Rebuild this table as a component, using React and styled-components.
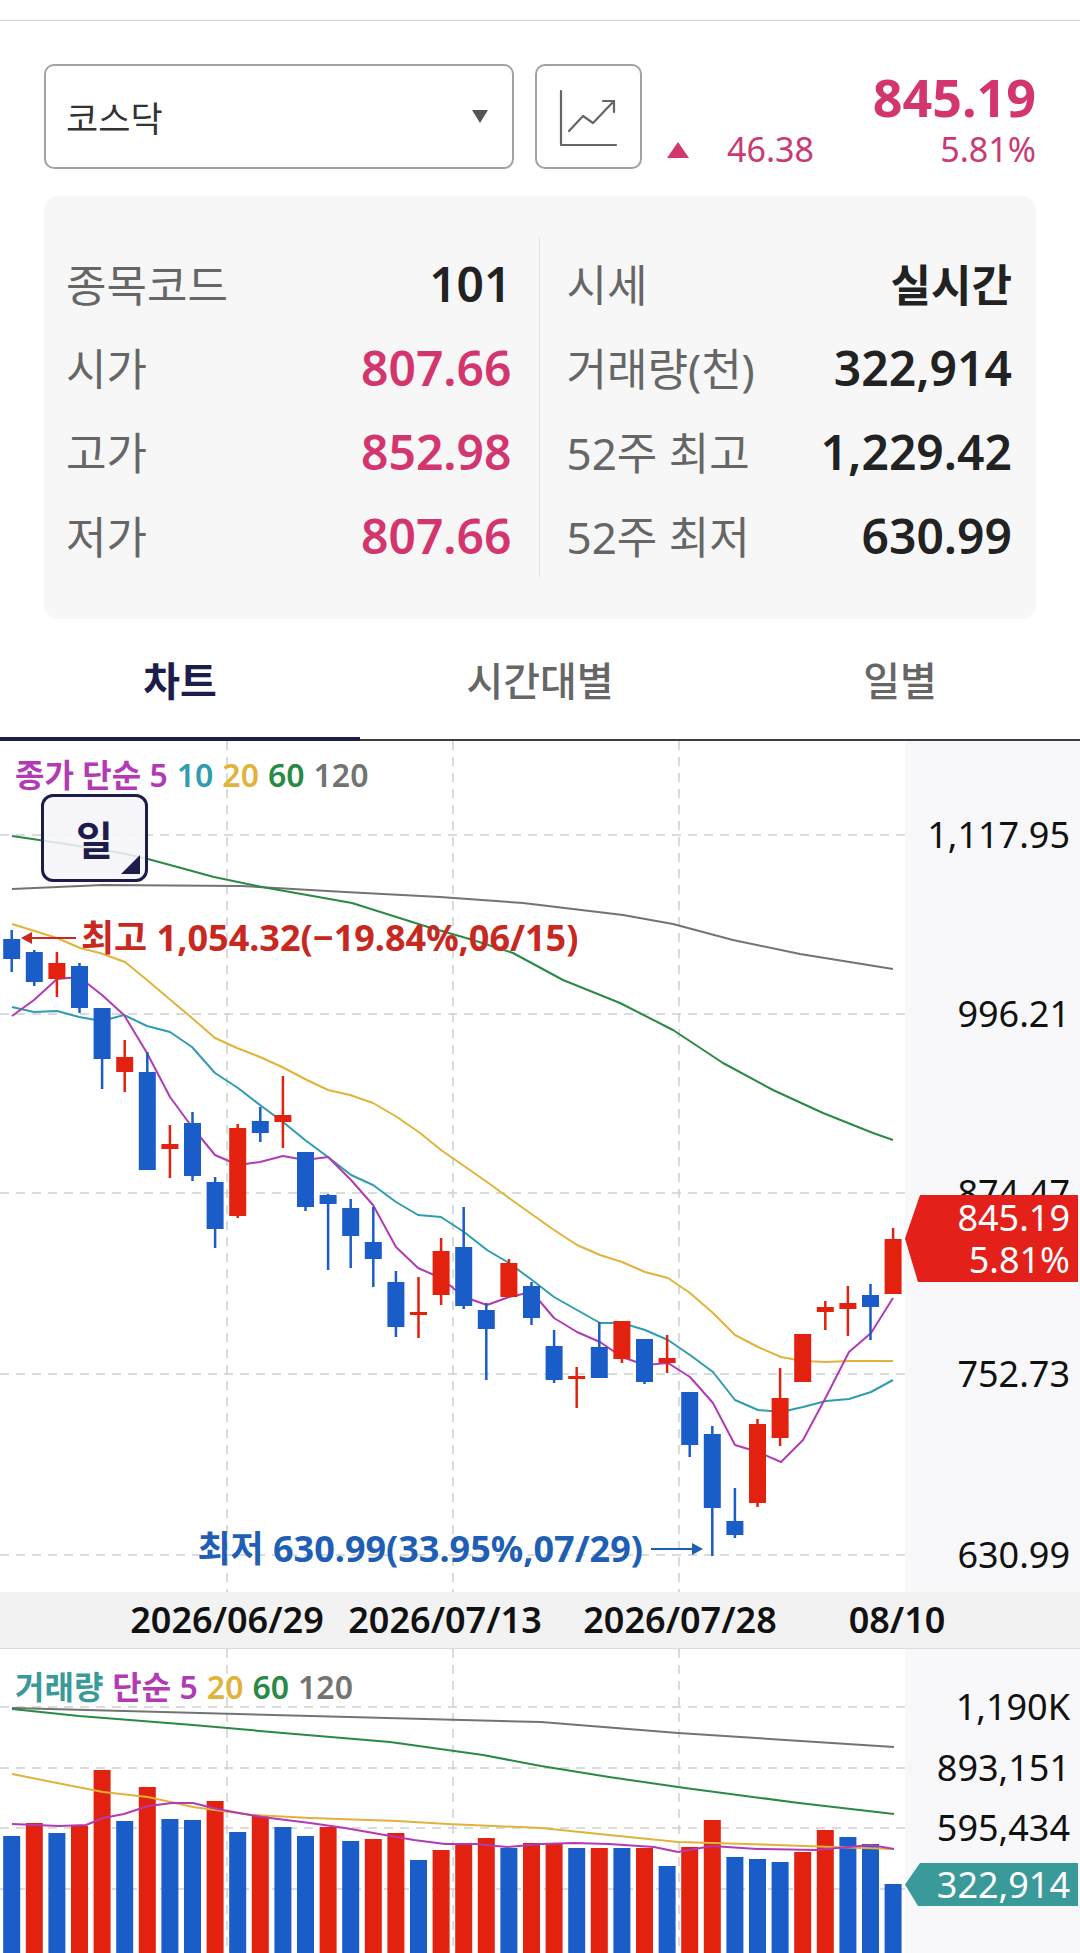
import React from "react";
import styled, { createGlobalStyle } from "styled-components";

const PINK = "#d3356f";
const RED = "#e3210f";
const BLUE = "#1a5cc8";
const NAVY = "#1d1d4b";
const MA = {
  m5: "#b23bb5",
  m10: "#2e9db0",
  m20: "#e2b33a",
  m60: "#2a8a45",
  m120: "#737373",
  vol: "#3a9a9a",
};

const GlobalStyle = createGlobalStyle`
  html, body {
    margin: 0;
    padding: 0;
    background: #fff;
  }
  body {
    font-family: "Noto Sans", "Noto Sans CJK KR", sans-serif;
    width: 1080px;
    overflow: hidden;
  }
  * {
    box-sizing: border-box;
  }
`;

// [bodyTop, bodyBottom, wickTop, wickBottom, color] in page pixels
const CANDLES = [
  [939, 959, 930, 972, "b"],
  [952, 982, 950, 986, "b"],
  [963, 979, 952, 997, "r"],
  [966, 1008, 963, 1013, "b"],
  [1008, 1059, 1008, 1089, "b"],
  [1057, 1072, 1040, 1092, "r"],
  [1072, 1170, 1052, 1170, "b"],
  [1144, 1149, 1125, 1178, "r"],
  [1123, 1176, 1112, 1181, "b"],
  [1182, 1229, 1177, 1248, "b"],
  [1128, 1216, 1124, 1218, "r"],
  [1121, 1133, 1107, 1142, "b"],
  [1115, 1122, 1076, 1148, "r"],
  [1152, 1207, 1152, 1211, "b"],
  [1195, 1204, 1194, 1270, "b"],
  [1208, 1236, 1199, 1268, "b"],
  [1242, 1259, 1207, 1287, "b"],
  [1282, 1327, 1271, 1337, "b"],
  [1312, 1315, 1277, 1338, "r"],
  [1251, 1295, 1238, 1305, "r"],
  [1247, 1306, 1207, 1309, "b"],
  [1310, 1329, 1303, 1380, "b"],
  [1263, 1297, 1259, 1297, "r"],
  [1286, 1318, 1282, 1325, "b"],
  [1346, 1380, 1330, 1383, "b"],
  [1376, 1379, 1367, 1408, "r"],
  [1347, 1378, 1322, 1378, "b"],
  [1321, 1359, 1321, 1363, "r"],
  [1339, 1382, 1339, 1384, "b"],
  [1358, 1363, 1335, 1373, "r"],
  [1392, 1445, 1392, 1457, "b"],
  [1434, 1508, 1426, 1556, "b"],
  [1521, 1535, 1488, 1538, "b"],
  [1424, 1503, 1419, 1507, "r"],
  [1398, 1438, 1368, 1446, "r"],
  [1334, 1382, 1334, 1382, "r"],
  [1307, 1312, 1301, 1330, "r"],
  [1303, 1309, 1286, 1336, "r"],
  [1295, 1307, 1284, 1340, "b"],
  [1239, 1294, 1228, 1294, "r"],
];

const PRICE_MA = [
  {
    color: MA.m120,
    pts: [[12, 889], [103, 885], [241, 886], [345, 892], [440, 897], [523, 903], [623, 915], [673, 924], [733, 940], [800, 954], [893, 969]],
  },
  {
    color: MA.m60,
    pts: [[12, 836], [66, 844], [121, 853], [148, 859], [214, 877], [262, 887], [352, 903], [428, 927], [473, 940], [513, 953], [563, 980], [620, 1003], [673, 1030], [723, 1063], [773, 1090], [823, 1113], [873, 1133], [893, 1140]],
  },
  {
    color: MA.m20,
    pts: [[12, 924], [57, 938], [80, 948], [100, 953], [125, 962], [147, 980], [167, 997], [192, 1018], [215, 1038], [237, 1048], [260, 1057], [282, 1067], [307, 1080], [328, 1090], [350, 1095], [373, 1103], [397, 1117], [420, 1133], [441, 1150], [464, 1166], [487, 1182], [509, 1198], [530, 1213], [554, 1230], [577, 1245], [600, 1255], [622, 1262], [645, 1272], [668, 1278], [690, 1293], [713, 1313], [735, 1335], [758, 1347], [781, 1357], [803, 1361], [826, 1362], [849, 1361], [893, 1361]],
  },
  {
    color: MA.m10,
    pts: [[12, 1007], [34, 1012], [57, 1011], [79, 1017], [102, 1021], [124, 1015], [147, 1026], [170, 1032], [192, 1047], [215, 1073], [238, 1088], [260, 1105], [283, 1122], [305, 1140], [328, 1157], [351, 1175], [373, 1185], [396, 1202], [418, 1215], [441, 1217], [464, 1232], [487, 1250], [509, 1263], [532, 1280], [554, 1297], [577, 1310], [600, 1323], [622, 1323], [645, 1330], [668, 1340], [690, 1355], [713, 1372], [735, 1400], [758, 1410], [781, 1412], [803, 1407], [826, 1401], [849, 1399], [871, 1392], [893, 1380]],
  },
  {
    color: MA.m5,
    pts: [[12, 1016], [34, 1000], [57, 979], [79, 977], [102, 995], [124, 1015], [147, 1053], [170, 1097], [192, 1127], [215, 1155], [238, 1165], [260, 1162], [283, 1156], [305, 1160], [328, 1157], [351, 1180], [373, 1205], [396, 1247], [418, 1268], [441, 1278], [464, 1297], [487, 1305], [509, 1297], [532, 1292], [554, 1318], [577, 1332], [600, 1342], [622, 1357], [645, 1365], [668, 1363], [690, 1377], [713, 1403], [735, 1445], [758, 1452], [781, 1462], [803, 1440], [826, 1397], [849, 1352], [871, 1333], [893, 1298]],
  },
];

// [top, color]
const VOLUME = [
  [1836, "b"], [1823, "r"], [1833, "b"], [1826, "r"], [1770, "r"], [1821, "b"], [1787, "r"], [1819, "b"],
  [1820, "b"], [1801, "r"], [1832, "b"], [1816, "r"], [1827, "b"], [1836, "b"], [1827, "r"], [1841, "b"],
  [1839, "r"], [1833, "r"], [1860, "b"], [1850, "r"], [1843, "r"], [1838, "r"], [1848, "b"], [1843, "r"],
  [1843, "r"], [1848, "b"], [1848, "r"], [1848, "b"], [1848, "r"], [1866, "b"], [1847, "r"], [1820, "r"],
  [1857, "b"], [1859, "b"], [1862, "b"], [1852, "r"], [1830, "r"], [1837, "b"], [1844, "b"], [1884, "b"],
];

const VOLUME_MA = [
  { color: MA.m120, pts: [[12, 1708], [541, 1722], [678, 1733], [894, 1747]] },
  { color: MA.m60, pts: [[12, 1709], [79, 1716], [193, 1725], [283, 1733], [390, 1742], [483, 1755], [541, 1766], [609, 1777], [685, 1788], [799, 1803], [894, 1814]] },
  { color: MA.m20, pts: [[12, 1774], [52, 1782], [103, 1792], [148, 1797], [193, 1807], [252, 1815], [310, 1818], [397, 1821], [448, 1824], [541, 1828], [609, 1835], [678, 1842], [747, 1844], [833, 1847], [894, 1849]] },
  { color: MA.m5, pts: [[12, 1824], [59, 1826], [86, 1825], [103, 1818], [124, 1814], [148, 1806], [172, 1803], [193, 1803], [217, 1809], [262, 1817], [310, 1823], [345, 1828], [379, 1834], [414, 1840], [445, 1844], [476, 1844], [507, 1847], [541, 1844], [574, 1843], [609, 1844], [654, 1847], [678, 1852], [712, 1846], [757, 1849], [816, 1850], [871, 1845], [894, 1849]] },
];

const candleX = (i) => 11.7 + 22.6 * i;
const toPoints = (pts) => pts.map((p) => p.join(",")).join(" ");
const tone = (c) => (c === "r" ? RED : BLUE);

const PRICE_GRID = [835, 1014, 1193, 1374, 1555];
const VOL_GRID = [1707, 1768, 1828, 1889];
const V_GRID = [227, 453, 679];

const CHART_TOP = 741;
const VOL_TOP = 1649;

const Page = styled.div`
  width: 1080px;
  background: #fff;
`;

const TopRule = styled.div`
  height: 21px;
  border-bottom: 1px solid #d2d2d2;
`;

const Header = styled.div`
  display: flex;
  gap: 21px;
  height: 105px;
  margin: 43px 44px 0;
`;

const Select = styled.div`
  width: 470px;
  display: flex;
  align-items: center;
  justify-content: space-between;
  padding: 0 24px 0 20px;
  border: 2px solid #a2a2a2;
  border-radius: 10px;
  font-family: "Noto Sans CJK KR", sans-serif;
  font-size: 35px;
  color: #333;
`;

const Caret = styled.span`
  width: 0;
  height: 0;
  border-left: 8px solid transparent;
  border-right: 8px solid transparent;
  border-top: 13px solid #555;
`;

const IconButton = styled.div`
  width: 107px;
  border: 2px solid #a2a2a2;
  border-radius: 10px;
  display: flex;
  & svg {
    width: 100%;
    height: 100%;
  }
`;

const PriceBlock = styled.div`
  flex: 1;
  display: flex;
  flex-direction: column;
`;

const PriceNow = styled.div`
  height: 66px;
  line-height: 66px;
  text-align: right;
  font-size: 52px;
  font-weight: 700;
  color: ${PINK};
`;

const PriceSub = styled.div`
  height: 39px;
  display: flex;
  align-items: center;
  font-size: 34px;
  line-height: 39px;
  color: #c93a74;
`;

const UpMark = styled.span`
  margin-left: 4px;
  width: 0;
  height: 0;
  border-left: 11px solid transparent;
  border-right: 11px solid transparent;
  border-bottom: 16px solid ${PINK};
`;

const Change = styled.span`
  margin-left: 38px;
`;

const Rate = styled.span`
  margin-left: auto;
`;

const InfoCard = styled.div`
  margin: 27px 44px 0;
  height: 423px;
  padding: 45px 24px 42px 22px;
  background: #f7f7f8;
  border-radius: 14px;
  display: grid;
  grid-template-columns: 1fr 1px 1fr;
  column-gap: 27px;
`;

const InfoColumn = styled.div`
  display: flex;
  flex-direction: column;
`;

const InfoDivider = styled.div`
  background: #e2e2e4;
  margin: -4px 0 0;
`;

const InfoRow = styled.div`
  height: 84px;
  display: flex;
  align-items: center;
  justify-content: space-between;
`;

const InfoLabel = styled.span`
  font-family: "Noto Sans", "Noto Sans CJK KR", sans-serif;
  font-size: 44px;
  color: #666;
`;

const InfoValue = styled.span`
  font-size: ${(p) => (p.$korean ? "44px" : "48px")};
  font-weight: ${(p) => (p.$korean ? 700 : 600)};
  color: ${(p) => (p.$pink ? PINK : "#222")};
`;

const Tabs = styled.div`
  display: grid;
  grid-template-columns: repeat(3, 1fr);
  height: 122px;
  border-bottom: 2px solid #3c3c44;
`;

const Tab = styled.div`
  position: relative;
  display: flex;
  align-items: center;
  justify-content: center;
  font-family: "Noto Sans CJK KR", sans-serif;
  font-size: 40px;
  font-weight: ${(p) => (p.$active ? 700 : 500)};
  color: ${(p) => (p.$active ? NAVY : "#666")};

  ${(p) =>
    p.$active &&
    `
    &::after {
      content: "";
      position: absolute;
      left: 0;
      right: 0;
      bottom: -3px;
      height: 5px;
      background: ${NAVY};
    }
  `}
`;

const ChartRow = styled.div`
  display: flex;
  height: ${(p) => p.$height}px;
`;

const Plot = styled.div`
  position: relative;
  width: 905px;
  background: #fff;
  & > svg {
    display: block;
  }
`;

const AxisColumn = styled.div`
  position: relative;
  flex: 1;
  background: #f8f8fa;
`;

const AxisLabel = styled.div`
  position: absolute;
  right: 10px;
  top: ${(p) => p.$y}px;
  transform: translateY(-50%);
  font-size: 36px;
  line-height: 1;
  color: #111;
  white-space: nowrap;
`;

const Legend = styled.div`
  position: absolute;
  left: 15px;
  top: ${(p) => p.$top}px;
  font-size: 32px;
  font-weight: 600;
  line-height: 36px;
  white-space: nowrap;
  display: flex;
  gap: 9px;
`;

const LegendItem = styled.span`
  color: ${(p) => p.$color};
`;

const DayButton = styled.div`
  position: absolute;
  left: 41px;
  top: 53px;
  width: 107px;
  height: 88px;
  border: 3px solid ${NAVY};
  border-radius: 12px;
  background: rgba(246, 246, 250, 0.85);
  display: flex;
  align-items: center;
  justify-content: center;
  font-family: "Noto Sans CJK KR", sans-serif;
  font-size: 40px;
  font-weight: 700;
  color: ${NAVY};

  &::after {
    content: "";
    position: absolute;
    right: 5px;
    bottom: 5px;
    width: 0;
    height: 0;
    border-left: 19px solid transparent;
    border-bottom: 19px solid ${NAVY};
  }
`;

const Marker = styled.div`
  position: absolute;
  left: 0;
  right: 2px;
  top: ${(p) => p.$top}px;
  height: ${(p) => p.$height}px;
  background: ${(p) => p.$bg};
  clip-path: polygon(15px 0, 100% 0, 100% 100%, 13px 100%, 0 50%);
  display: flex;
  flex-direction: column;
  justify-content: center;
  align-items: flex-end;
  padding-right: 8px;
  font-size: 36px;
  line-height: 42px;
  color: #fff;
`;

const DateBar = styled.div`
  position: relative;
  height: 57px;
  background: #f2f2f3;
  border-bottom: 1px solid #dcdcdc;
`;

const DateLabel = styled.div`
  position: absolute;
  left: ${(p) => p.$x}px;
  top: 50%;
  transform: translate(-50%, -50%);
  font-size: 36px;
  font-weight: 600;
  line-height: 1;
  color: #111;
  white-space: nowrap;
`;

function Grid({ rows, top, height }) {
  return (
    <g stroke="#d0d0d0" strokeWidth="1.5" strokeDasharray="9 7">
      {rows.map((y) => (
        <line key={"h" + y} x1="0" x2="905" y1={y} y2={y} />
      ))}
      {V_GRID.map((x) => (
        <line key={"v" + x} x1={x} x2={x} y1={top} y2={top + height} />
      ))}
    </g>
  );
}

function PriceChart() {
  return (
    <ChartRow $height={851}>
      <Plot>
        <svg width="905" height="851" viewBox={`0 ${CHART_TOP} 905 851`}>
          <Grid rows={PRICE_GRID} top={CHART_TOP} height={851} />
          {PRICE_MA.map((m) => (
            <polyline key={m.color} points={toPoints(m.pts)} fill="none" stroke={m.color} strokeWidth="2" strokeLinejoin="round" />
          ))}
          {CANDLES.map(([bt, bb, wt, wb, c], i) => {
            const x = candleX(i);
            return (
              <g key={i} fill={tone(c)} stroke="none">
                <rect x={x - 1.25} y={wt} width="2.5" height={wb - wt} />
                <rect x={x - 8.5} y={bt} width="17" height={Math.max(bb - bt, 3)} />
              </g>
            );
          })}
          <g fill="#c8281e" stroke="#c8281e">
            <line x1="30" x2="76" y1="938" y2="938" strokeWidth="2" />
            <polygon points="21,938 32,932 32,944" stroke="none" />
            <text x="81" y="951" stroke="none" fontSize="36" fontWeight="700">
              최고 1,054.32(−19.84%,06/15)
            </text>
          </g>
          <g fill="#1f5eb5" stroke="#1f5eb5">
            <text x="643" y="1562" stroke="none" fontSize="36" fontWeight="700" textAnchor="end">
              최저 630.99(33.95%,07/29)
            </text>
            <line x1="651" x2="694" y1="1549" y2="1549" strokeWidth="2" />
            <polygon points="703,1549 692,1543 692,1555" stroke="none" />
          </g>
        </svg>
        <Legend $top={16}>
          <LegendItem $color={MA.m5}>종가 단순 5</LegendItem>
          <LegendItem $color={MA.m10}>10</LegendItem>
          <LegendItem $color={MA.m20}>20</LegendItem>
          <LegendItem $color={MA.m60}>60</LegendItem>
          <LegendItem $color={MA.m120}>120</LegendItem>
        </Legend>
        <DayButton>일</DayButton>
      </Plot>
      <AxisColumn>
        {[
          ["1,117.95", 835],
          ["996.21", 1014],
          ["874.47", 1193],
          ["752.73", 1374],
          ["630.99", 1555],
        ].map(([t, y]) => (
          <AxisLabel key={t} $y={y - CHART_TOP}>
            {t}
          </AxisLabel>
        ))}
        <Marker $top={1195 - CHART_TOP} $height={87} $bg="#e3211a">
          <span>845.19</span>
          <span>5.81%</span>
        </Marker>
      </AxisColumn>
    </ChartRow>
  );
}

function VolumeChart() {
  return (
    <ChartRow $height={304}>
      <Plot>
        <svg width="905" height="304" viewBox={`0 ${VOL_TOP} 905 304`}>
          <Grid rows={VOL_GRID} top={VOL_TOP} height={304} />
          {VOLUME.map(([top, c], i) => (
            <rect key={i} x={candleX(i) - 8.5} y={top} width="17" height={1953 - top} fill={tone(c)} />
          ))}
          {VOLUME_MA.map((m) => (
            <polyline key={m.color} points={toPoints(m.pts)} fill="none" stroke={m.color} strokeWidth="2" strokeLinejoin="round" />
          ))}
        </svg>
        <Legend $top={20}>
          <LegendItem $color={MA.vol}>거래량</LegendItem>
          <LegendItem $color={MA.m5}>단순 5</LegendItem>
          <LegendItem $color={MA.m20}>20</LegendItem>
          <LegendItem $color={MA.m60}>60</LegendItem>
          <LegendItem $color={MA.m120}>120</LegendItem>
        </Legend>
      </Plot>
      <AxisColumn>
        {[
          ["1,190K", 1707],
          ["893,151", 1768],
          ["595,434", 1828],
        ].map(([t, y]) => (
          <AxisLabel key={t} $y={y - VOL_TOP}>
            {t}
          </AxisLabel>
        ))}
        <Marker $top={1863 - VOL_TOP} $height={43} $bg={MA.vol}>
          <span>322,914</span>
        </Marker>
      </AxisColumn>
    </ChartRow>
  );
}

const LEFT_INFO = [
  ["종목코드", "101", false],
  ["시가", "807.66", true],
  ["고가", "852.98", true],
  ["저가", "807.66", true],
];

const RIGHT_INFO = [
  ["시세", "실시간", true],
  ["거래량(천)", "322,914", false],
  ["52주 최고", "1,229.42", false],
  ["52주 최저", "630.99", false],
];

export default function App() {
  return (
    <Page>
      <GlobalStyle />
      <TopRule />
      <Header>
        <Select>
          <span>코스닥</span>
          <Caret />
        </Select>
        <IconButton>
          <svg viewBox="0 0 103 101" fill="none" stroke="#666" strokeWidth="2.2" strokeLinecap="round" strokeLinejoin="round">
            <polyline points="24,25 24,79 79,79" />
            <polyline points="32,65 46,50 56,57 77,35" />
            <polyline points="66,35 77,35 77,46" />
          </svg>
        </IconButton>
        <PriceBlock>
          <PriceNow>845.19</PriceNow>
          <PriceSub>
            <UpMark />
            <Change>46.38</Change>
            <Rate>5.81%</Rate>
          </PriceSub>
        </PriceBlock>
      </Header>

      <InfoCard>
        <InfoColumn>
          {LEFT_INFO.map(([label, value, pink]) => (
            <InfoRow key={label}>
              <InfoLabel>{label}</InfoLabel>
              <InfoValue $pink={pink}>{value}</InfoValue>
            </InfoRow>
          ))}
        </InfoColumn>
        <InfoDivider />
        <InfoColumn>
          {RIGHT_INFO.map(([label, value, korean]) => (
            <InfoRow key={label}>
              <InfoLabel>{label}</InfoLabel>
              <InfoValue $korean={korean}>{value}</InfoValue>
            </InfoRow>
          ))}
        </InfoColumn>
      </InfoCard>

      <Tabs>
        <Tab $active>차트</Tab>
        <Tab>시간대별</Tab>
        <Tab>일별</Tab>
      </Tabs>

      <PriceChart />

      <DateBar>
        <DateLabel $x={227}>2026/06/29</DateLabel>
        <DateLabel $x={445}>2026/07/13</DateLabel>
        <DateLabel $x={680}>2026/07/28</DateLabel>
        <DateLabel $x={897}>08/10</DateLabel>
      </DateBar>

      <VolumeChart />
    </Page>
  );
}
